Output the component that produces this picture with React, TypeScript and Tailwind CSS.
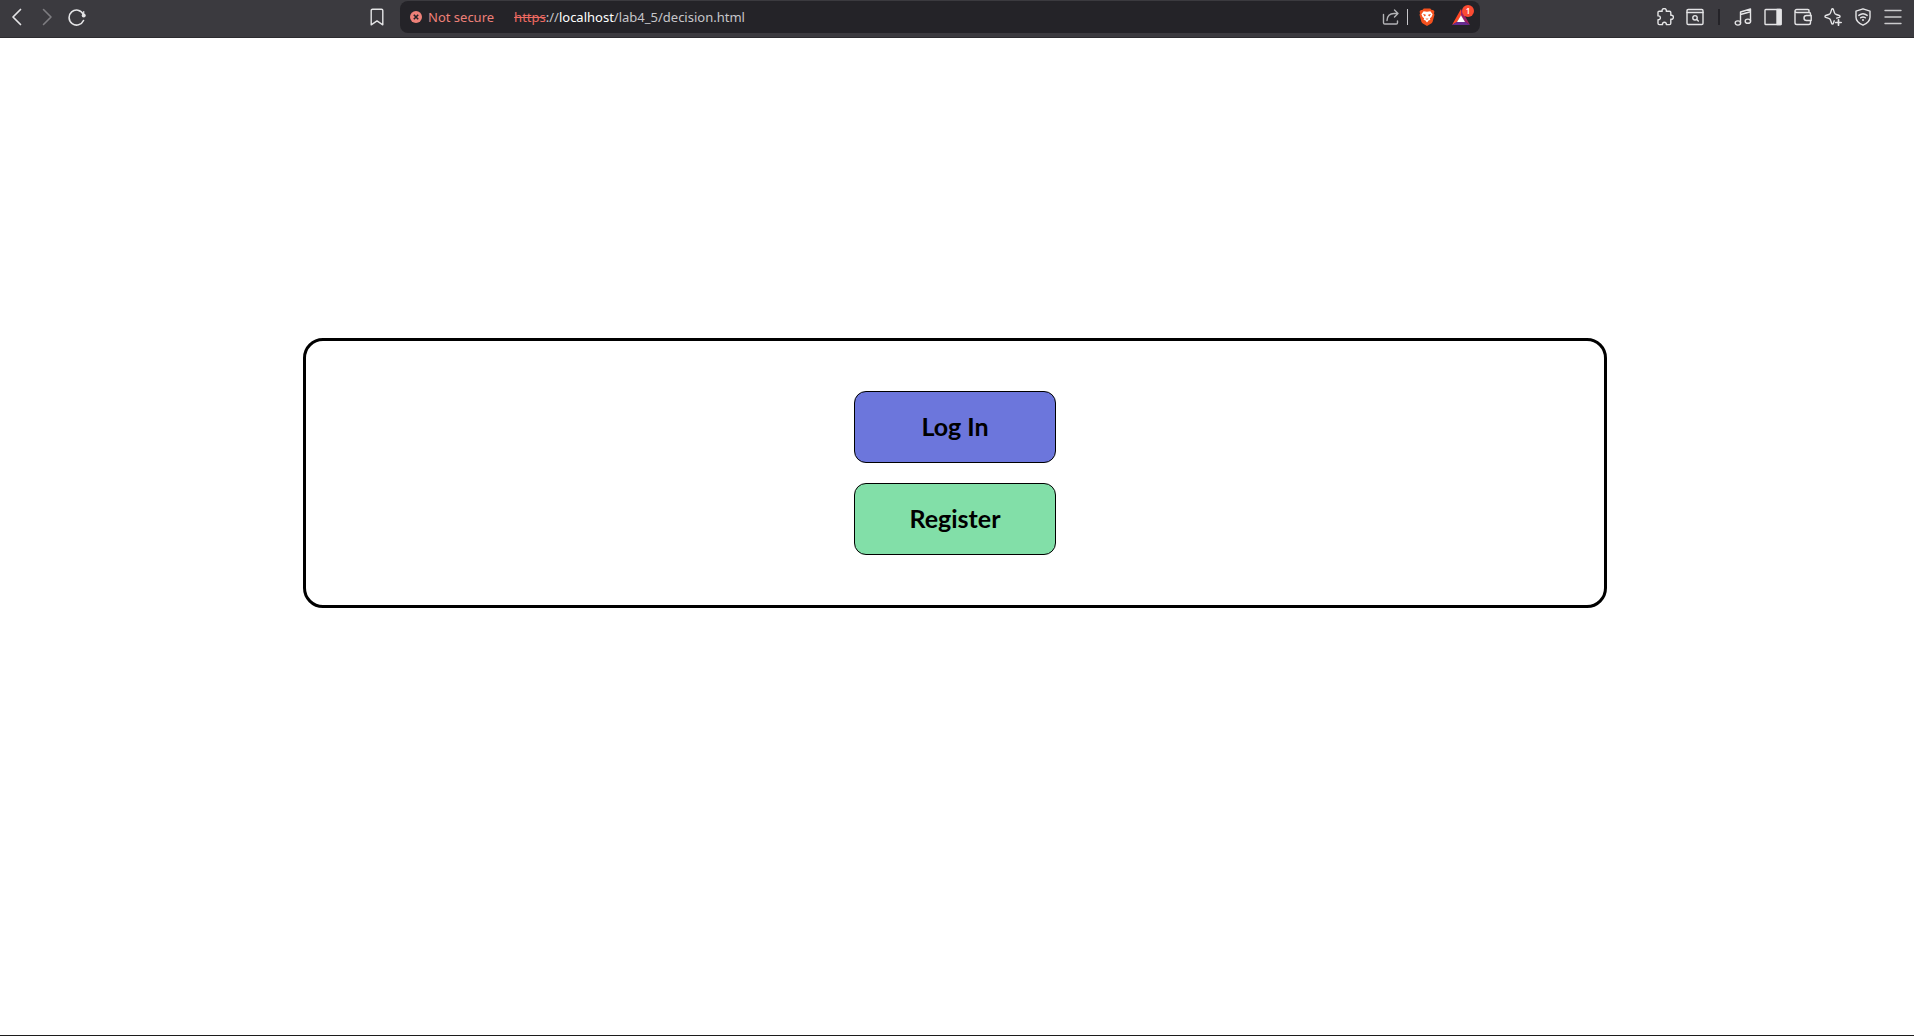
import type { ReactNode } from "react";

function ToolButton({ label, children }: { label: string; children: ReactNode }) {
  return (
    <button type="button" aria-label={label} className="flex h-8 w-[30px] shrink-0 items-center justify-center text-[#e4e4e6]">
      {children}
    </button>
  );
}

function Icon({ children, className = "" }: { children: ReactNode; className?: string }) {
  return (
    <svg
      viewBox="0 0 18 18"
      width="18"
      height="18"
      fill="none"
      stroke="currentColor"
      strokeWidth="1.4"
      strokeLinecap="round"
      strokeLinejoin="round"
      aria-hidden="true"
      className={className}
    >
      {children}
    </svg>
  );
}

function Toolbar() {
  return (
    <header className="flex h-[38px] shrink-0 items-start border-b border-[#2c2b2f] bg-[#3b3a3f] pt-px">
      <nav className="flex w-[400px] shrink-0 items-center pr-2 pl-0.5">
        <ToolButton label="Back">
          <Icon><path d="M12.500 1.500 5 9l7.500 7.500" strokeWidth="1.700" /></Icon>
        </ToolButton>
        <ToolButton label="Forward">
          <Icon className="text-[#7e7d81]"><path d="M5.500 1.500 13 9l-7.500 7.500" strokeWidth="1.600" /></Icon>
        </ToolButton>
        <ToolButton label="Reload">
          <Icon>
            <path d="M15.200 6A7.500 7.500 0 1 0 15.500 12.500" strokeWidth="1.600" />
            <circle cx="15.700" cy="7.400" r="2" fill="currentColor" stroke="none" />
            <path d="M15.700 3.500v4" strokeWidth="1.200" />
          </Icon>
        </ToolButton>
        <div className="flex-1" />
        <ToolButton label="Bookmark this tab">
          <Icon><path d="M4.500 1.200h9a1.300 1.300 0 0 1 1.300 1.300v14.300L9 12.900l-5.800 3.900V2.500a1.300 1.300 0 0 1 1.300-1.300Z" /></Icon>
        </ToolButton>
      </nav>

      <div className="flex h-8 min-w-0 flex-1 items-center rounded-lg bg-[#242328] pr-1 pl-[9px] font-['Noto_Sans',sans-serif] text-[13px] leading-5">
        <button type="button" className="flex shrink-0 items-center gap-[5px] text-[#ee8078]">
          <svg viewBox="0 0 14 14" width="14" height="14" aria-hidden="true">
            <circle cx="7" cy="7" r="6" fill="#ee8078" />
            <path d="m4.800 4.800 4.400 4.400m0-4.400L4.800 9.200" stroke="#242328" strokeWidth="1.600" />
          </svg>
          <span>Not secure</span>
        </button>
        <div className="ml-5 flex-1 truncate text-[#c7c6ca]">
          <span className="text-[#ee6a62] line-through">https</span>
          <span>://</span>
          <span className="text-white">localhost</span>
          <span>/lab4_5/decision.html</span>
        </div>
        <button type="button" aria-label="Share" className="flex h-8 w-[30px] shrink-0 items-center justify-center text-[#b3b3b6]">
          <Icon>
            <path d="M1.500 6.500v8.200c0 .8.500 1.300 1.300 1.300h11.400c.8 0 1.300-.5 1.300-1.300V13" />
            <path d="M5 12.500c.3-4.500 3-7 7-7H16M12.500 2 16 5.500 12.500 9" />
          </Icon>
        </button>
        <span className="mr-1 ml-px h-4 w-px bg-[#c7c6ca]" />
        <button type="button" aria-label="Brave Shields" className="mr-1 flex h-8 w-[30px] shrink-0 items-center justify-center">
          <svg viewBox="0 0 16 18" width="16" height="18" aria-hidden="true">
            <path d="M4.800.5h6.400l1.500 1.600 1.500-.2 1.300 1.900-.6 1.400.6 1.500-1.900 7c-.3.900-.7 1.400-1.400 1.900L8 18l-4.200-2.400c-.7-.5-1.100-1-1.400-1.900L.5 6.700l.6-1.500-.6-1.400 1.300-1.900 1.500.2Z" fill="#f4511e" />
            <path d="m4.600 3.300 3.400.5 3.400-.5 2.200 2.900-1.200 2.700-1.500 1.400.4 1.600-1.500.4L8 14.500l-1.800-2.200-1.500-.4.400-1.600-1.500-1.400-1.200-2.700Z" fill="#fff" />
            <path d="m4 6 2.500.5.300 1.100-1.200.9Zm8 0-2.500.5-.3 1.100 1.200.9ZM6.400 10.300l1.600.5 1.600-.5L8 12Z" fill="#f4511e" />
          </svg>
        </button>
        <button type="button" aria-label="Brave Rewards" className="relative flex h-8 w-[30px] shrink-0 items-center justify-center">
          <svg viewBox="0 0 18 16" width="18" height="16" aria-hidden="true">
            <path d="M9 0 0 16l5-3 4-6.500Z" fill="#ff4724" />
            <path d="m9 0 9 16-5-3-4-6.500Z" fill="#9e1f63" />
            <path d="M0 16h18l-5-3.300H5Z" fill="#662d91" />
            <path d="m9 6.200 4 6.800H5Z" fill="#fff" />
          </svg>
          <span className="absolute top-1 right-0.5 flex size-3 items-center justify-center rounded-full bg-[#fb4b32] text-[8px] leading-3 font-semibold text-white">
            1
          </span>
        </button>
      </div>

      <nav className="flex w-[434px] shrink-0 items-center justify-end pr-1.5">
        <ToolButton label="Extensions">
          <Icon><path d="M3.300 3.200h2.900c-.5-1.500.5-2.600 2-2.600s2.500 1.100 2 2.600h3.300c.8 0 1.300.5 1.300 1.300v2.800c1.500-.4 2.600.5 2.600 1.900s-1.100 2.300-2.600 1.900v4.200c0 .8-.5 1.300-1.300 1.300h-3.200c.3-1.400-.5-2.300-1.900-2.300s-2.200.9-1.900 2.300H3.300c-.8 0-1.300-.5-1.300-1.300v-3.600c1.500.2 2.400-.6 2.400-1.900S3.500 7.700 2 7.900V4.500c0-.8.500-1.300 1.300-1.300Z" /></Icon>
        </ToolButton>
        <ToolButton label="Search tabs">
          <Icon>
            <rect x="1" y="1.500" width="16" height="15" rx="1.200" />
            <path d="M1 4.500h16" />
            <circle cx="9" cy="9.800" r="2.200" />
            <path d="m10.800 11.600 1.500 1.500" />
          </Icon>
        </ToolButton>
        <span className="mx-2 h-4 w-0.5 bg-[#242328]" />
        <ToolButton label="Media">
          <Icon>
            <path d="M6.500 14.800V4L16.500 1v12M6.500 6.500l10-2.700" />
            <ellipse cx="3.900" cy="15" rx="2.700" ry="2.100" />
            <ellipse cx="13.900" cy="13.200" rx="2.700" ry="2.100" />
          </Icon>
        </ToolButton>
        <ToolButton label="Sidebar">
          <Icon>
            <rect x="1" y="1.500" width="16" height="15" rx="0.800" />
            <path d="M13 1.500h4v15h-4Z" fill="currentColor" />
          </Icon>
        </ToolButton>
        <ToolButton label="Wallet">
          <Icon>
            <path d="M15 4.500V2.700c0-.7-.5-1.200-1.200-1.200H2.700C1.700 1.500 1 2.200 1 3s.7 1.500 1.700 1.500h12.500c.8 0 1.300.5 1.300 1.300v1.700M1 3v11.700c0 1 .8 1.800 1.800 1.800h11.900c1 0 1.800-.8 1.800-1.800v-2" />
            <path d="M17.200 7.500h-4.700a2.500 2.500 0 0 0 0 5h4.700Z" />
          </Icon>
        </ToolButton>
        <ToolButton label="Leo AI">
          <Icon>
            <path d="M8.500.8c.5 0 .7.300.9.800l1 3c.3 1 .9 1.600 1.900 1.900l3 1c1 .4 1 1.400 0 1.800l-2.600.8M8.500.8c-.5 0-.7.300-.9.800l-1 3c-.3 1-.9 1.600-1.900 1.900l-3 1c-1 .4-1 1.400 0 1.800l3 1c1 .3 1.600.9 1.900 1.900l1 3c.3 1 1.500 1 1.800 0l.8-2.400" />
            <path d="M14.500 11.800v5.400M11.800 14.500h5.400" strokeWidth="1.700" />
          </Icon>
        </ToolButton>
        <ToolButton label="VPN">
          <Icon>
            <path d="m9 .8 7 2.300v6.100c0 3.500-2.900 6.200-7 8-4.100-1.800-7-4.500-7-8V3.100Z" />
            <path d="M4.800 7.400c2.500-2 5.900-2 8.400 0M6.600 9.800c1.500-1.100 3.300-1.100 4.800 0" />
            <circle cx="9" cy="12" r="1" fill="currentColor" stroke="none" />
          </Icon>
        </ToolButton>
        <ToolButton label="Menu">
          <Icon className="text-[#cbcbcd]"><path d="M1 2.500h16M1 9h16M1 15.500h16" /></Icon>
        </ToolButton>
      </nav>
    </header>
  );
}

export default function App() {
  return (
    <div className="flex min-h-screen flex-col border-b border-[#1c1c1c] bg-white">
      <Toolbar />
      <main className="flex flex-1 flex-col items-center pt-[300px] pr-1">
        <section className="flex w-[1304px] max-w-full flex-col items-center gap-5 rounded-[20px] border-3 border-black p-[50px]">
          <button type="button" className="h-[72px] w-[202px] rounded-xl border border-black bg-[#6c76dc] font-['Lato',sans-serif] text-[25px] font-bold text-black">
            Log In
          </button>
          <button type="button" className="h-[72px] w-[202px] rounded-xl border border-black bg-[#82dfa8] font-['Lato',sans-serif] text-[25px] font-bold text-black">
            Register
          </button>
        </section>
      </main>
    </div>
  );
}
